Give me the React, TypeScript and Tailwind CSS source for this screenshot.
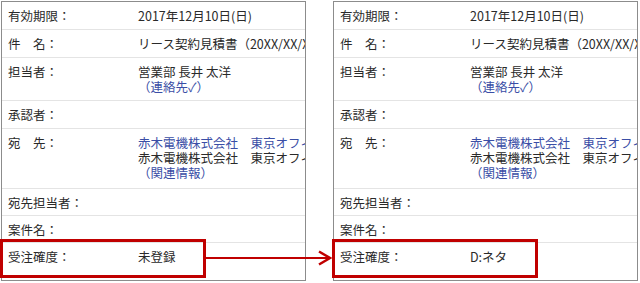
import React from 'react'

type Row = {
  label: string
  height: string
  lines: { text: string; link?: boolean }[]
}

const font = { fontFamily: '"Noto Sans CJK JP", "Noto Sans", sans-serif' }

function rows(status: string): Row[] {
  return [
    { label: '有効期限：', height: 'h-[28px]', lines: [{ text: '2017年12月10日(日)' }] },
    { label: '件　名：', height: 'h-[28px]', lines: [{ text: 'リース契約見積書（20XX/XX/XX）' }] },
    {
      label: '担当者：',
      height: 'h-[43px]',
      lines: [{ text: '営業部 長井 太洋' }, { text: '（連絡先✓）', link: true }],
    },
    { label: '承認者：', height: 'h-[28px]', lines: [] },
    {
      label: '宛　先：',
      height: 'h-[60px]',
      lines: [
        { text: '赤木電機株式会社　東京オフィス', link: true },
        { text: '赤木電機株式会社　東京オフィス' },
        { text: '（関連情報）', link: true },
      ],
    },
    { label: '宛先担当者：', height: 'h-[27px]', lines: [] },
    { label: '案件名：', height: 'h-[27px]', lines: [] },
    { label: '受注確度：', height: 'h-[37px]', lines: [{ text: status }] },
  ]
}

function Panel({ status }: { status: string }) {
  const list = rows(status)
  return (
    <div className="w-[305px] h-[280px] shrink-0 overflow-hidden border border-[#8c8c8c] bg-white">
      {list.map((row, i) => (
        <div
          key={row.label}
          className={`flex ${row.height} pt-[6px] pl-[6px] ${
            i < list.length - 1 ? 'border-b border-[#e4e4e4]' : ''
          }`}
        >
          <div className="w-[130px] shrink-0 text-[12.5px] leading-[15px] text-[#2a2a2a]">{row.label}</div>
          <div className="flex flex-col whitespace-nowrap">
            {row.lines.map((line, j) => (
              <span
                key={j}
                className={`text-[12.5px] leading-[15px] ${line.link ? 'text-[#3a4ea6]' : 'text-[#2a2a2a]'}`}
              >
                {line.text}
              </span>
            ))}
          </div>
        </div>
      ))}
    </div>
  )
}

export default function App() {
  return (
    <div className="relative w-[640px] h-[283px] overflow-hidden bg-white" style={font}>
      <div className="flex gap-[27px] pl-[1px] pt-[1px]">
        <Panel status="未登録" />
        <Panel status="D:ネタ" />
      </div>

      {/* highlight boxes and arrow */}
      <div className="absolute left-0 top-[239px] w-[206px] h-[39px] border-[3px] border-[#c00000]" />
      <div className="absolute left-[332px] top-[239px] w-[206px] h-[39px] border-[3px] border-[#c00000]" />
      <svg className="absolute left-[205px] top-[250px]" width="128" height="16" viewBox="0 0 128 16">
        <line x1="0" y1="8" x2="124" y2="8" stroke="#c00000" strokeWidth="2" />
        <path d="M114 1.5 L125 8 L114 14.5" fill="none" stroke="#c00000" strokeWidth="2.5" />
      </svg>
    </div>
  )
}
